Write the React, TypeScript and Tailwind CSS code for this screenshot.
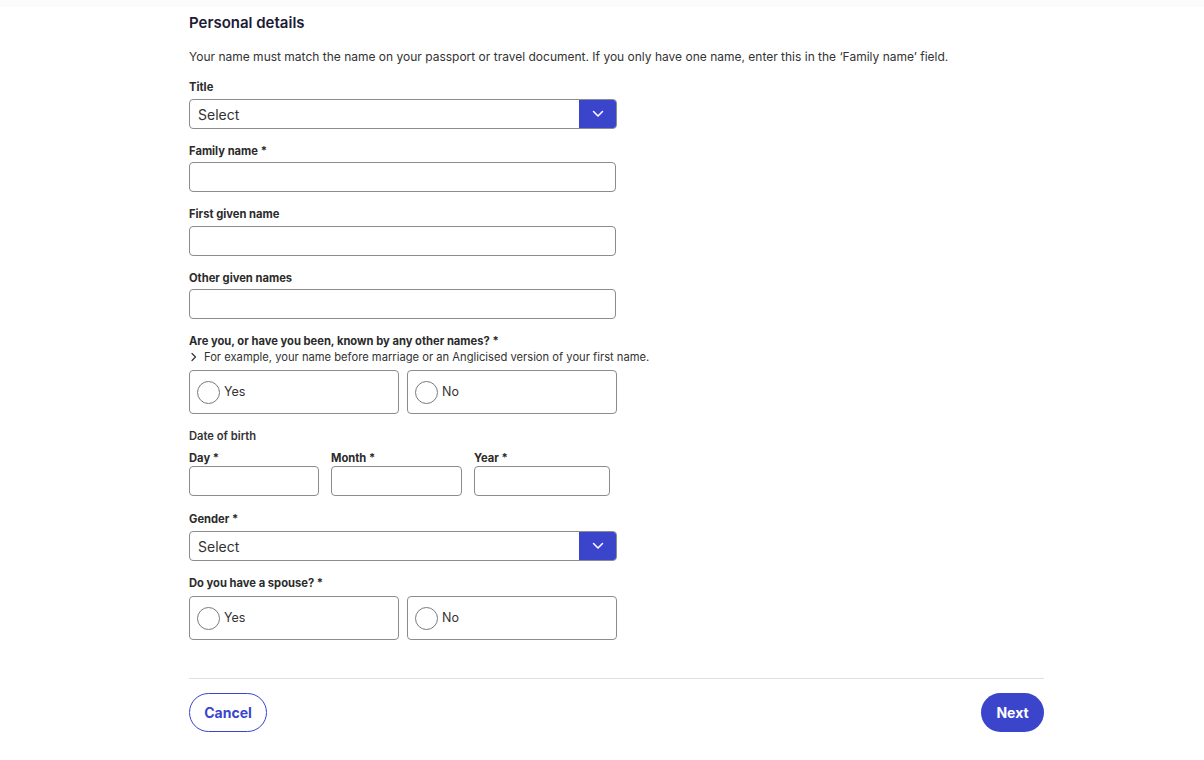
import React from 'react';

const font = { fontFamily: 'Inter, "Liberation Sans", sans-serif' };

function Label({ children, className = '' }: { children: React.ReactNode; className?: string }) {
  return <div className={`text-[11.2px] font-bold leading-[16px] text-[#2b2b2b] ${className}`}>{children}</div>;
}

function TextInput({ className = 'w-[427px]' }: { className?: string }) {
  return <div className={`h-[30px] rounded-[4px] border border-[#8c8c8c] bg-white ${className}`} />;
}

function SelectBox() {
  return (
    <div className="flex h-[30px] w-[428px] overflow-hidden rounded-[4px] border border-[#8c8c8c]">
      <div className="flex flex-1 items-center pl-[8px] text-[14px] text-[#333]">Select</div>
      <div className="-my-px -mr-px flex w-[38px] items-center justify-center bg-[#3a45cc]">
        <svg width="12" height="8" viewBox="0 0 12 8" fill="none">
          <path d="M1.5 1.5L6 6l4.5-4.5" stroke="white" strokeWidth="1.5" strokeLinecap="round" strokeLinejoin="round" />
        </svg>
      </div>
    </div>
  );
}

function RadioPair() {
  return (
    <div className="flex gap-[8px]">
      {['Yes', 'No'].map((o) => (
        <div key={o} className="flex h-[44px] w-[210px] items-center gap-[4px] rounded-[4px] border border-[#8c8c8c] pl-[7px]">
          <span className="h-[23px] w-[23px] rounded-full border border-[#7a7a7a]" />
          <span className="text-[12.5px] text-[#333]">{o}</span>
        </div>
      ))}
    </div>
  );
}

export default function App() {
  return (
    <div className="min-h-[760px] bg-white" style={font}>
      <div className="h-[7px] bg-[#fbfbfb]" />
      <div className="ml-[189px] w-[855px]">
        <h1 className="mt-[7px] text-[15px] font-semibold leading-[18px] text-[#1c1b36]">Personal details</h1>
        <p className="mt-[17px] text-[12px] leading-[16px] text-[#333]">
          Your name must match the name on your passport or travel document. If you only have one name, enter this in the ‘Family name’ field.
        </p>

        <div className="mt-[14px] flex w-[428px] flex-col">
          <Label className="mb-[4px]">Title</Label>
          <SelectBox />

          <Label className="mb-[3px] mt-[14px]">Family name *</Label>
          <TextInput />

          <Label className="mb-[4px] mt-[14px]">First given name</Label>
          <TextInput />

          <Label className="mb-[3px] mt-[14px]">Other given names</Label>
          <TextInput />

          <Label className="mt-[14px]">Are you, or have you been, known by any other names? *</Label>
          <div className="flex items-center gap-[6px] whitespace-nowrap text-[11.2px] leading-[16px] text-[#333]">
            <svg width="8" height="10" viewBox="0 0 8 10" fill="none" className="ml-[1px] shrink-0">
              <path d="M2 1.5L5.5 5 2 8.5" stroke="#333" strokeWidth="1.2" strokeLinecap="round" strokeLinejoin="round" />
            </svg>
            For example, your name before marriage or an Anglicised version of your first name.
          </div>
          <div className="mt-[5px]">
            <RadioPair />
          </div>

          <div className="mt-[14px] text-[11.2px] font-semibold leading-[16px] text-[#333]">Date of birth</div>
          <div className="mt-[6px] flex">
            <div className="w-[142px]">
              <Label className="leading-[14px]">Day *</Label>
              <TextInput className="w-[130px]" />
            </div>
            <div className="w-[143px]">
              <Label className="leading-[14px]">Month *</Label>
              <TextInput className="w-[131px]" />
            </div>
            <div>
              <Label className="leading-[14px]">Year *</Label>
              <TextInput className="w-[136px]" />
            </div>
          </div>

          <Label className="mb-[4px] mt-[15px]">Gender *</Label>
          <SelectBox />

          <Label className="mb-[5px] mt-[14px]">Do you have a spouse? *</Label>
          <RadioPair />
        </div>

        <div className="mt-[38px] border-t border-[#e0e0e0]" />
        <div className="mt-[14px] flex items-center justify-between">
          <button className="h-[39px] w-[78px] rounded-full border border-[#3a45cc] text-[14px] font-bold text-[#3a45cc]">Cancel</button>
          <button className="h-[39px] w-[63px] rounded-full bg-[#3a45cc] text-[14px] font-bold text-white">Next</button>
        </div>
      </div>
    </div>
  );
}
